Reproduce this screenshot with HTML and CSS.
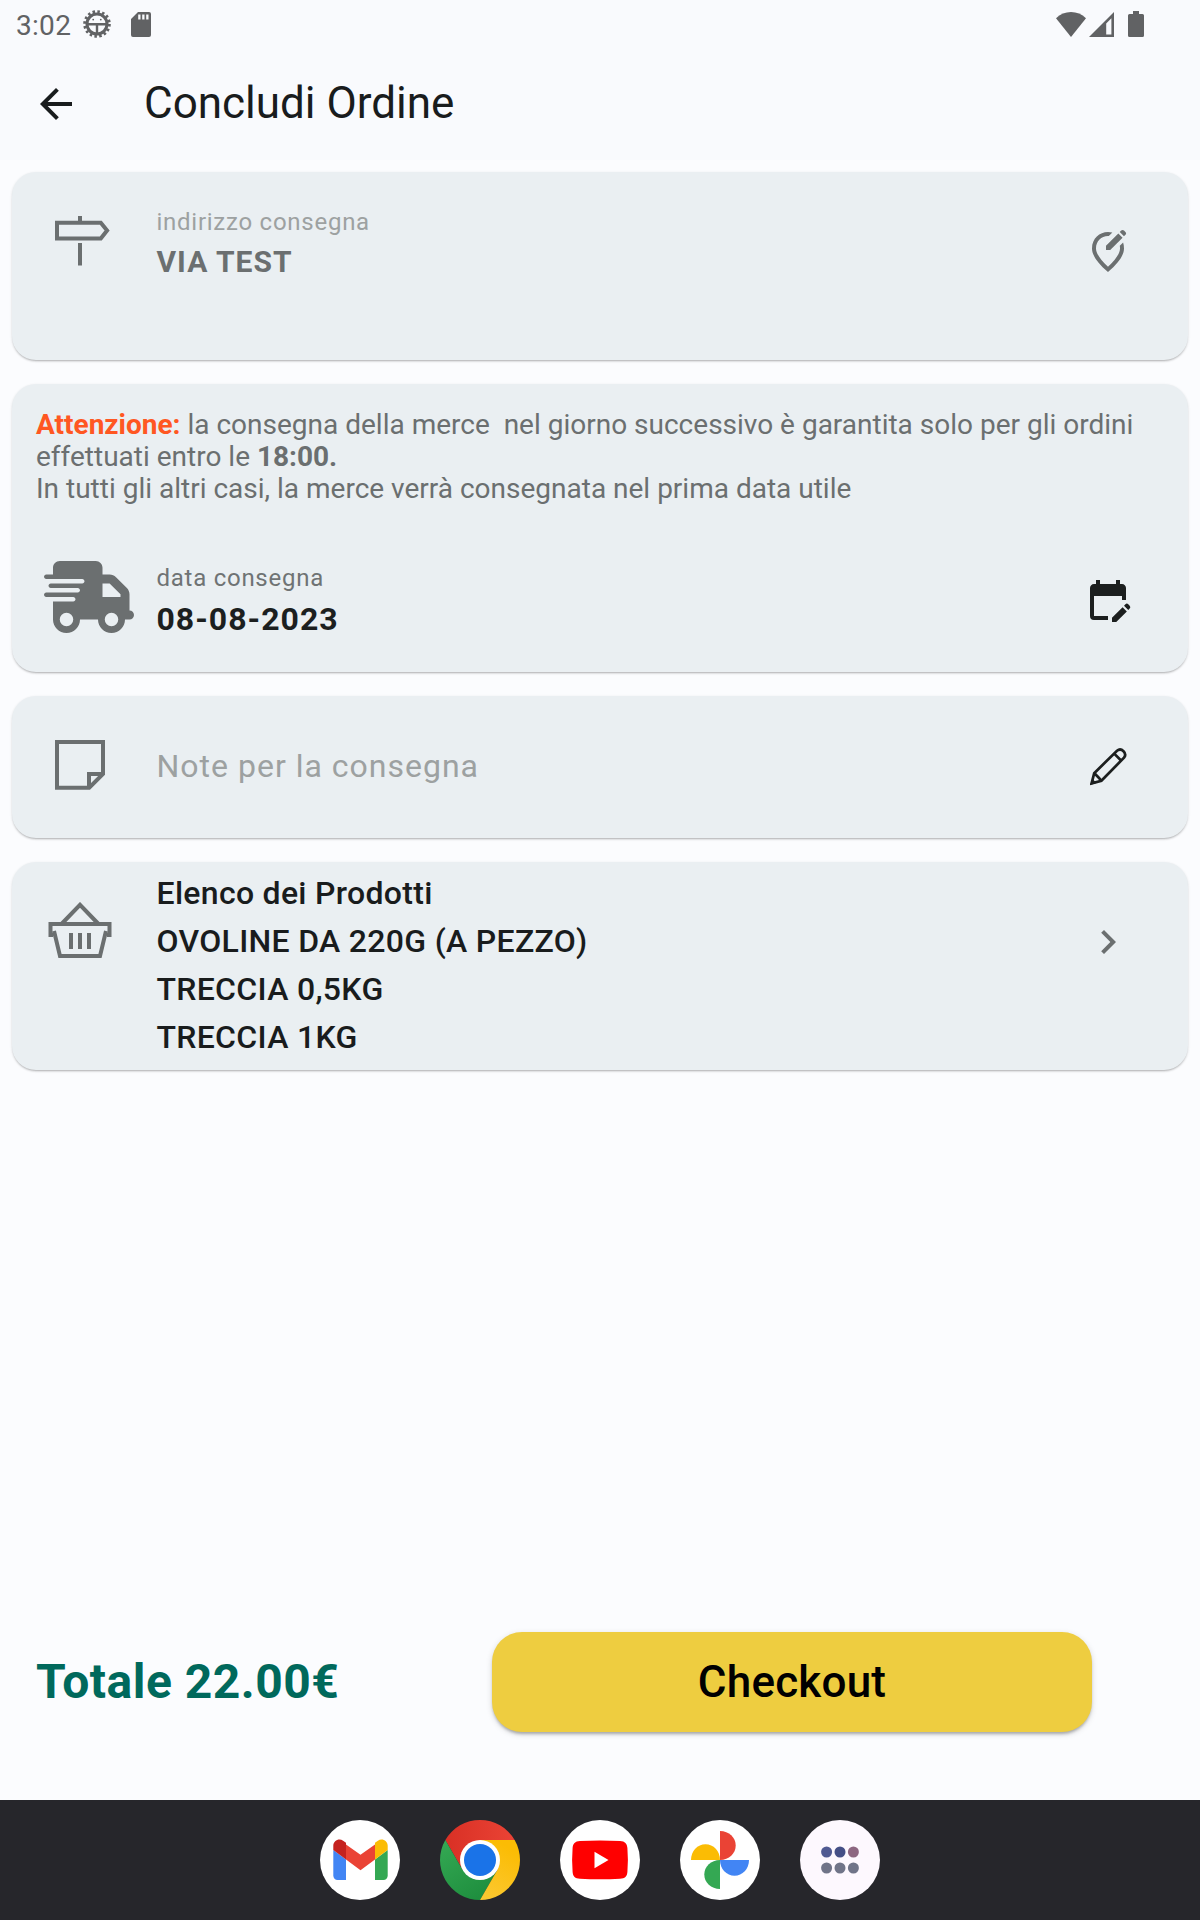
FILE: index.html
```
<!DOCTYPE html>
<html lang="it">
<head>
<meta charset="utf-8">
<title>Concludi Ordine</title>
<link rel="stylesheet" href="styles.css">
</head>
<body>
<div class="screen">
  <header class="top">
    <div class="status">
      <span class="time">3:02</span>
      <svg class="bug" width="28" height="28" viewBox="0 0 28 28"><circle cx="14" cy="14" r="10" fill="none" stroke="currentColor" stroke-width="3"/><circle cx="14" cy="14" r="12.400" fill="none" stroke="currentColor" stroke-width="2.800" stroke-dasharray="2.500 2.370"/><path d="M4 13h20v2.400H4zM12.800 14h2.400v10h-2.400z" fill="currentColor"/><circle cx="10.200" cy="9.600" r=".9" fill="currentColor"/><circle cx="17.800" cy="9.600" r=".9" fill="currentColor"/></svg>
      <svg class="sd" width="20" height="25" viewBox="0 0 20 25"><path fill="currentColor" fill-rule="evenodd" d="M7 0h11a2 2 0 0 1 2 2v21a2 2 0 0 1-2 2H2a2 2 0 0 1-2-2V7zM7.200 2.400v5h2.300v-5zm4 0v5h2.300v-5zm4 0v5h2.300v-5z"/></svg>
      <span class="spacer"></span>
      <svg width="30" height="25" viewBox="0 0 30 25"><path fill="currentColor" d="M0 6.300C8-2 22-2 30 6.300L15 25z"/></svg>
      <svg class="signal" width="25" height="25" viewBox="0 0 25 25"><path fill="currentColor" fill-rule="evenodd" d="M25 0v25H0zM22.400 6.300l-5.200 5.200v11h5.200z"/></svg>
      <svg class="battery" width="16" height="26" viewBox="0 0 16 26"><path fill="currentColor" d="M5 0h6v3h3.500A1.500 1.500 0 0 1 16 4.500v20a1.500 1.500 0 0 1-1.500 1.500h-13A1.500 1.500 0 0 1 0 24.500v-20A1.500 1.500 0 0 1 1.500 3H5z"/></svg>
    </div>
    <div class="appbar">
      <svg width="48" height="48" viewBox="0 0 24 24"><path fill="currentColor" d="M20 11H7.830l5.590-5.590L12 4l-8 8 8 8 1.410-1.410L7.830 13H20z"/></svg>
      <h1 class="title">Concludi Ordine</h1>
    </div>
  </header>

  <main class="cards">
    <section class="card address">
      <svg class="lead sign" width="56" height="50" viewBox="0 0 56 50"><path fill="currentColor" d="M23 0h4v5h-4zM23 27h4v22.500h-4z"/><path fill="none" stroke="currentColor" stroke-width="4" d="M2 6.800h43.800l6.300 7.700-6.300 8.100H2z"/></svg>
      <div class="body">
        <div class="label faint">indirizzo consegna</div>
        <div class="value via">VIA TEST</div>
      </div>
      <svg class="trail pin" width="48" height="48" viewBox="0 0 24 24"><path fill="currentColor" d="M12 2c.74 0 1.470.1 2.170.3l-1.750 1.750C12.280 4.040 12.140 4 12 4c-3.350 0-6 2.570-6 6.200 0 2.340 1.950 5.440 6 9.140 4.050-3.700 6-6.790 6-9.140v-.12c0-.4-.04-.79-.1-1.170l1.650-1.650c.29.9.45 1.880.45 2.940 0 3.320-2.670 7.250-8 11.800-5.330-4.550-8-8.480-8-11.800C4 5.220 7.800 2 12 2zM11 11h2.120l6.160-6.160-2.120-2.120L11 8.880zM20.710 2l-.71-.71a1 1 0 0 0-1.410 0l-.72.72 2.120 2.120.72-.72a1 1 0 0 0 0-1.410z"/></svg>
    </section>

    <section class="card delivery">
      <p class="notice"><b class="warn">Attenzione:</b> la consegna della merce&nbsp; nel giorno successivo è garantita solo per gli ordini<br>effettuati entro le <b>18:00.</b><br>In tutti gli altri casi, la merce verrà consegnata nel prima data utile</p>
      <div class="row">
        <svg class="lead truck" width="90" height="72" viewBox="0 0 640 512"><path fill="currentColor" d="M112 0C85.500 0 64 21.500 64 48V96H16c-8.800 0-16 7.200-16 16s7.200 16 16 16H272c8.800 0 16 7.200 16 16s-7.200 16-16 16H48c-8.800 0-16 7.200-16 16s7.200 16 16 16H240c8.800 0 16 7.200 16 16s-7.200 16-16 16H16c-8.800 0-16 7.200-16 16s7.200 16 16 16H208c8.800 0 16 7.200 16 16s-7.200 16-16 16H64V416c0 53 43 96 96 96s96-43 96-96H384c0 53 43 96 96 96s96-43 96-96h32c17.700 0 32-14.300 32-32s-14.300-32-32-32V237.300c0-17-6.700-33.300-18.700-45.300L512 114.700c-12-12-28.300-18.700-45.300-18.700H416V48c0-26.500-21.500-48-48-48H112zM544 237.300V256H416V160h50.700L544 237.300zM160 368a48 48 0 1 1 0 96 48 48 0 1 1 0-96zm272 48a48 48 0 1 1 96 0 48 48 0 1 1-96 0z"/></svg>
        <div class="body">
          <div class="label">data consegna</div>
          <div class="value date">08-08-2023</div>
        </div>
        <svg class="trail calendar" width="48" height="48" viewBox="0 0 24 24"><path fill="currentColor" d="M12 22H5a2 2 0 0 1-2-2V6c0-1.100.9-2 2-2h1V2h2v2h8V2h2v2h1c1.100 0 2 .9 2 2v6h-2v-2H5v10h7zM22.130 16.990l.71-.71a1 1 0 0 0 0-1.410l-.71-.71a1 1 0 0 0-1.410 0l-.71.71zM21.420 17.700l-5.300 5.300H14v-2.120l5.300-5.300z"/></svg>
      </div>
    </section>

    <section class="card note">
      <svg class="lead paper" width="50" height="50" viewBox="0 0 50 50"><path fill="none" stroke="currentColor" stroke-width="4" d="M2 2h46v32L34.200 47.700H2zM34 47V34h14"/></svg>
      <div class="body hint">Note per la consegna</div>
      <svg class="trail pencil" width="38" height="38" viewBox="0 0 38 38"><g fill="none" stroke="currentColor" stroke-width="2.700"><path d="M1.600 35.400l2.600-10.200L27 2.700c4.500-3.500 10.500 2.500 7 7L11.400 32.800z" stroke-linejoin="miter"/><path d="M24 5.400l7.300 7.300M4.400 25.300c2 2 4.500 4.400 6.800 7.300"/></g><path fill="currentColor" d="M0 37l2.600-6 3.900 4z"/></svg>
    </section>

    <section class="card products">
      <svg class="lead basket" width="64" height="56" viewBox="0 0 64 56"><g fill="none" stroke="currentColor" stroke-width="4"><path d="M14 21.500L32 2.800l18 18.700"/><path d="M5 33H2.500V22h59v11H59"/><path d="M6 29l6 25h40l6-25"/><path d="M23 31v16M32 31v16M41 31v16"/></g></svg>
      <div class="body list">
        <div>Elenco dei Prodotti</div>
        <div class="item">OVOLINE DA 220G (A PEZZO)</div>
        <div class="item">TRECCIA 0,5KG</div>
        <div class="item">TRECCIA 1KG</div>
      </div>
      <svg class="trail chevron" width="48" height="48" viewBox="0 0 24 24"><path fill="currentColor" d="M10 6L8.590 7.410 13.170 12l-4.580 4.590L10 18l6-6z"/></svg>
    </section>
  </main>

  <div class="checkout-bar">
    <div class="total">Totale 22.00€</div>
    <button class="checkout" type="button">Checkout</button>
  </div>

  <nav class="dock">
    <svg width="80" height="80" viewBox="0 0 80 80"><circle cx="40" cy="40" r="40" fill="#fff"/><path fill="#4285f4" d="M13.300 30L26 39.500V60h-8.500a4.200 4.200 0 0 1-4.200-4.200z"/><path fill="#34a853" d="M67.700 30L55 39.500V60h8.500a4.200 4.200 0 0 0 4.200-4.200z"/><path fill="#ea4335" d="M26 24.500l14.500 10.200L55 24.500v15L40.500 50.300 26 39.500z"/><path fill="#c5221f" d="M13.300 30v-4.300c0-5 5.700-8 9.800-5L26 22.800v16.700z"/><path fill="#fbbc04" d="M67.700 30v-4.300c0-5-5.700-8-9.800-5L55 22.800v16.700z"/></svg>
    <svg width="80" height="80" viewBox="0 0 80 80"><defs><linearGradient id="cr"><stop offset="0" stop-color="#d93025"/><stop offset="1" stop-color="#ea4335"/></linearGradient><linearGradient id="cg" x1=".7" y1="1" x2=".1" y2="0"><stop offset="0" stop-color="#1e8e3e"/><stop offset="1" stop-color="#34a853"/></linearGradient><linearGradient id="cy" x1="0" y1="1" x2=".4" y2="0"><stop offset="0" stop-color="#fcc934"/><stop offset="1" stop-color="#fbbc04"/></linearGradient></defs><path fill="url(#cr)" d="M5.360 20a40 40 0 0 1 69.280 0H40L22.700 50z"/><path fill="url(#cg)" d="M40 80A40 40 0 0 1 5.360 20L22.700 50 40 60l17.300-10z"/><path fill="url(#cy)" d="M74.640 20A40 40 0 0 1 40 80l17.300-30L40 20z"/><circle cx="40" cy="40" r="20" fill="#fff"/><circle cx="40" cy="40" r="16" fill="#1a73e8"/></svg>
    <svg width="80" height="80" viewBox="0 0 80 80"><circle cx="40" cy="40" r="40" fill="#fff"/><path fill="#f00" d="M20 20.900q20-1 40 0c5 .3 7 2.600 7.400 7q1 12 0 24c-.4 4.400-2.400 6.500-7.400 6.800q-20 1-40 0c-5-.3-7-2.400-7.400-6.800q-1-12 0-24c.4-4.400 2.400-6.700 7.400-7z"/><path fill="#fff" d="M34.500 31.800v16.400L48.500 40z"/></svg>
    <svg width="80" height="80" viewBox="0 0 80 80"><circle cx="40" cy="40" r="40" fill="#fff"/><path fill="#ea4335" d="M40 11c9 0 15.700 6.500 15.700 14.500S49 40 40 40z"/><path fill="#4285f4" d="M69 40c0 9-6.500 15.700-14.500 15.700S40 49 40 40z"/><path fill="#34a853" d="M40 69c-9 0-15.700-6.500-15.700-14.500S31 40 40 40z"/><path fill="#fbbc04" d="M11 40c0-9 6.500-15.700 14.500-15.700S40 31 40 40z"/></svg>
    <svg width="80" height="80" viewBox="0 0 80 80"><circle cx="40" cy="40" r="40" fill="#fdf8fe"/><g fill="#707488"><circle cx="26.600" cy="48" r="5.500"/><circle cx="40" cy="48" r="5.500"/><circle cx="53.400" cy="48" r="5.500"/></g><circle cx="26.600" cy="32" r="5.500" fill="#505a92"/><circle cx="40" cy="32" r="5.500" fill="#444f86"/><circle cx="53.400" cy="32" r="5.500" fill="#8d6781"/></svg>
  </nav>
</div>
</body>
</html>
```
FILE: styles.css
```
* { box-sizing: border-box; }
body {
  margin: 0;
  background: #fbfcfe;
  color: #191c1d;
  font-family: Roboto, sans-serif;
}
svg { display: block; flex: none; }
.screen { display: flex; flex-direction: column; width: 1200px; height: 1920px; }

.top { height: 160px; background: #f9fafd; }
.status {
  display: flex;
  align-items: center;
  height: 48px;
  padding: 0 56px 0 16px;
  color: #616264;
}
.time { width: 54px; margin-top: 3px; font-size: 28px; line-height: 32px; letter-spacing: .3px; white-space: nowrap; }
.bug { margin-left: 13px; }
.sd { margin-left: 20px; }
.spacer { flex: 1; }
.signal { margin-left: 3px; }
.battery { margin-left: 14px; }
.appbar { display: flex; align-items: center; height: 112px; padding: 0 32px; gap: 64px; }
.title { margin: 0 0 2px; font-size: 44px; line-height: 52px; font-weight: 400; }

.cards { display: flex; flex-direction: column; gap: 24px; padding: 12px 12px 0; }
.card {
  border-radius: 24px;
  background: #eaeff2;
  box-shadow: 0 2px 2px -1px rgba(0,0,0,.22), 0 1px 3px rgba(0,0,0,.12);
}
.address, .note, .products, .row { display: grid; grid-template-columns: 136px 1fr 160px; }
.body { padding-left: 8.5px; }
.lead { color: #6b6f70; }
.trail { justify-self: center; }

.address { height: 188px; padding-top: 36px; color: #6b6f70; }
.sign { margin: 8px 0 0 43px; }
.pin { margin-top: 20px; }
.label { font-size: 24px; line-height: 28px; letter-spacing: .74px; color: #6f7374; }
.faint { color: #9da1a1; }
.value { font-weight: 700; line-height: 36px; }
.via { margin-top: 8px; font-size: 30px; letter-spacing: 1px; }
.date { margin-top: 8.5px; font-size: 32px; letter-spacing: 1px; color: #1c1f1f; }

.delivery { height: 288px; padding-top: 25px; }
.notice { margin: 0; padding-left: 24px; font-size: 28px; line-height: 32px; color: #6b6f70; white-space: nowrap; }
.warn { color: #ff5722; }
.row { padding-top: 59px; }
.truck { margin: -3px 0 0 32px; }
.calendar { margin-top: 12px; color: #1c1f1f; }

.note { height: 142px; align-items: center; }
.paper { margin: -4px 0 0 43px; }
.hint { margin-top: -2px; font-size: 32px; line-height: 40px; letter-spacing: 1px; color: #9da1a1; }
.note .pencil { margin-left: 2px; color: #1c1f1f; }

.products { height: 208px; padding: 8px 0; }
.basket { margin: 32px 0 0 36px; }
.list { margin-top: -1px; font-size: 32px; line-height: 48px; font-weight: 500; letter-spacing: .3px; }
.chevron { margin-top: 48px; color: #6b6f70; }

.checkout-bar { display: flex; align-items: center; margin-top: auto; padding: 0 108px 68px 36px; }
.total { width: 456px; color: #00695c; font-size: 48px; line-height: 56px; font-weight: 700; letter-spacing: .5px; white-space: nowrap; }
.checkout {
  width: 600px;
  height: 100px;
  padding: 0;
  border: 0;
  border-radius: 30px;
  background: #eecd40;
  box-shadow: 0 3px 3px -1px rgba(0,0,0,.25), 0 2px 6px rgba(0,0,0,.15);
  color: #000;
  font: 500 44px/52px Roboto, sans-serif;
  letter-spacing: .2px;
}

.dock { display: flex; justify-content: center; align-items: center; gap: 40px; height: 120px; background: #26262b; }
```
